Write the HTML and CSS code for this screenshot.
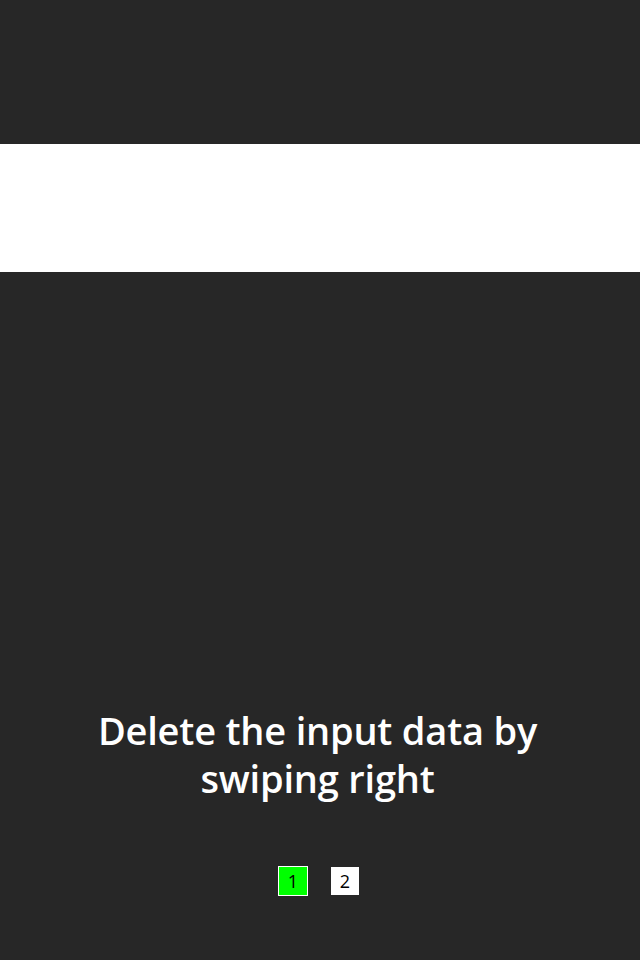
FILE: index.html
```html
<!DOCTYPE html>
<html>
<head>
<meta charset="utf-8">
<link rel="stylesheet" href="styles.css">
</head>
<body>
<div class="screen">
  <div class="top"></div>
  <div class="band"></div>
  <div class="spacer"></div>
  <h1 class="caption">Delete the input data by<br>swiping right</h1>
  <div class="pager">
    <span class="dot active">1</span>
    <span class="dot">2</span>
  </div>
</div>
</body>
</html>
```
FILE: styles.css
```css
html, body {
  margin: 0;
  padding: 0;
  background: #272727;
}
.screen {
  width: 640px;
  height: 960px;
  display: flex;
  flex-direction: column;
  background: #272727;
  overflow: hidden;
}
.top {
  height: 144px;
  flex: none;
}
.band {
  height: 128px;
  background: #ffffff;
  flex: none;
}
.spacer {
  height: 434px;
  flex: none;
}
.caption {
  margin: 0;
  padding-right: 5px;
  color: #ffffff;
  font-family: "Open Sans", "Noto Sans", sans-serif;
  font-weight: 600;
  font-size: 38px;
  line-height: 48px;
  text-align: center;
  letter-spacing: -0.2px;
}
.pager {
  margin-top: 64px;
  padding-right: 3px;
  display: flex;
  justify-content: center;
  align-items: center;
  gap: 23px;
}
.dot {
  width: 28px;
  height: 28px;
  background: #ffffff;
  color: #000000;
  font-family: "Open Sans", "Noto Sans", sans-serif;
  font-size: 18px;
  line-height: 28px;
  text-align: center;
}
.dot.active {
  background: #00ff00;
  border: 1px solid #ffffff;
}
```
